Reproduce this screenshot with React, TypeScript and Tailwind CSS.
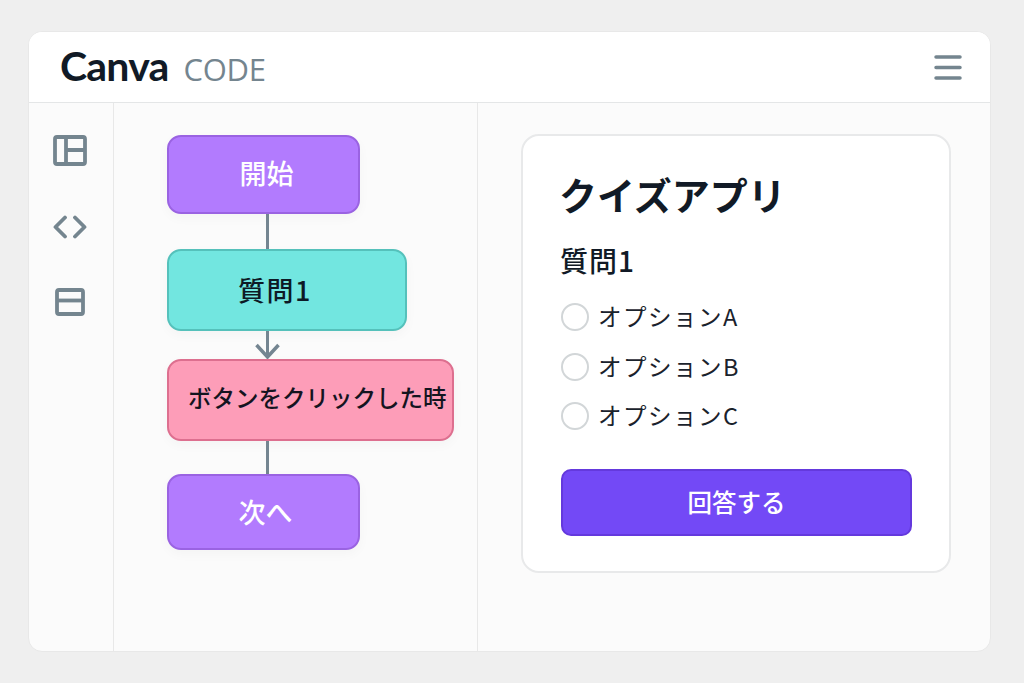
import React from 'react'

const jp = "font-['Noto_Sans_CJK_JP','Noto_Sans',sans-serif]"

const FlowNode = ({ label, className }: { label: string; className: string }) => (
  <div className={`flex items-center border-2 rounded-[14px] shadow-[0_4px_12px_rgba(0,0,0,0.03)] ${className}`}>
    {label}
  </div>
)

const Line = ({ height }: { height: string }) => (
  <div className={`w-[3px] ml-[99px] bg-[#748591] ${height}`} />
)

const Option = ({ label }: { label: string }) => (
  <div className="flex items-center gap-[9px] h-[28px]">
    <span className="w-[28px] h-[28px] rounded-full bg-white border-2 border-[#d2d6d8]" />
    <span className="text-[23.5px] leading-none tracking-[1.5px] text-[#1a222c]">{label}</span>
  </div>
)

export default function App() {
  return (
    <div className={`w-[1024px] h-[683px] overflow-hidden bg-[#efefef] pt-[31px] pl-[28px] ${jp}`}>
      <div className="w-[963px] h-[621px] flex flex-col overflow-hidden bg-[#fbfbfb] rounded-[14px] border border-[#e8e8e8]">
        {/* Header */}
        <div className="h-[71px] shrink-0 flex items-center justify-between bg-white border-b border-[#e4e6e7] pl-[31px] pr-[28px]">
          <div className="flex items-baseline gap-[15px] pb-[3px]">
            <span className="font-['Lato',sans-serif] font-bold text-[41px] leading-none tracking-[-0.8px] text-[#111a26]">Canva</span>
            <span className="font-['Open_Sans',sans-serif] font-medium text-[31px] leading-none tracking-[-0.3px] text-[#74858f]">CODE</span>
          </div>
          <svg width="28" height="25" viewBox="0 0 28 25" fill="none" stroke="#74858f" strokeWidth="3.5" strokeLinecap="round">
            <path d="M2 2h24M2 12.5h24M2 23h24" />
          </svg>
        </div>

        <div className="flex-1 flex min-h-0">
          {/* Icon rail */}
          <div className="w-[85px] shrink-0 flex flex-col items-center border-r border-[#e8e8e8] pt-[32px] pr-[2px]">
            <svg width="34" height="31" viewBox="0 0 34 31" fill="none" stroke="#74858f" strokeWidth="3.8" strokeLinejoin="round">
              <rect x="2" y="2" width="30" height="27" rx="2" />
              <path d="M13 2v27M13 15h19" />
            </svg>
            <svg className="mt-[49px]" width="34" height="24" viewBox="0 0 34 24" fill="none" stroke="#74858f" strokeWidth="3.8" strokeLinecap="round" strokeLinejoin="round">
              <path d="M12 2.5 2.5 12l9.5 9.5M22 2.5l9.5 9.5-9.5 9.5" />
            </svg>
            <svg className="mt-[49px]" width="30" height="28" viewBox="0 0 30 28" fill="none" stroke="#74858f" strokeWidth="3.8" strokeLinejoin="round">
              <rect x="2" y="2" width="26" height="24" rx="2" />
              <path d="M2 12.5h26" />
            </svg>
          </div>

          {/* Flow diagram */}
          <div className="w-[364px] shrink-0 border-r border-[#e8e8e8] pt-[32px] pl-[53px]">
            <FlowNode label="開始" className="w-[193px] h-[79px] justify-center pl-[6px] pb-[2px] bg-[#b27bfe] border-[#9a63e2] text-white text-[27px] font-medium" />
            <Line height="h-[35px]" />
            <FlowNode label="質問1" className="w-[240px] h-[82px] pl-[69px] bg-[#72e6e0] border-[#55c1bb] text-[#0d1a26] text-[27px] tracking-[1.5px] font-medium" />
            <div className="relative h-[28px]">
              <Line height="h-[26px]" />
              <svg className="absolute left-[88px] top-[11px]" width="25" height="17" viewBox="0 0 25 17" fill="none" stroke="#748591" strokeWidth="3.5">
                <path d="M1.5 3 12.5 15 23.5 3" />
              </svg>
            </div>
            <FlowNode label="ボタンをクリックした時" className="w-[287px] h-[82px] pl-[19px] pb-[4px] whitespace-nowrap bg-[#fd9db8] border-[#dd6f8f] text-[#14141f] text-[23.5px] font-medium" />
            <Line height="h-[33px]" />
            <FlowNode label="次へ" className="w-[193px] h-[76px] justify-center pl-[4px] bg-[#b27bfe] border-[#9a63e2] text-white text-[27px] font-medium" />
          </div>

          {/* Preview */}
          <div className="flex-1 pt-[31px] pl-[43px]">
            <div className="w-[430px] h-[439px] flex flex-col bg-white rounded-[18px] border-2 border-[#e8e9ea] pl-[38px] pr-[37px]">
              <h1 className="mt-[30px] -ml-[2px] text-[38px] leading-[56px] font-bold text-[#111a26]">クイズアプリ</h1>
              <h2 className="mt-[18px] -ml-[1px] text-[28px] leading-[40px] tracking-[1px] font-medium text-[#111a26]">質問1</h2>
              <div className="mt-[23px] flex flex-col gap-[21.5px]">
                <Option label="オプションA" />
                <Option label="オプションB" />
                <Option label="オプションC" />
              </div>
              <button className="mt-[39px] h-[67px] w-[351px] shrink-0 rounded-[10px] bg-[#7349f6] border-2 border-[#6439dd] text-white text-[24.5px] font-medium">
                回答する
              </button>
            </div>
          </div>
        </div>
      </div>
    </div>
  )
}
